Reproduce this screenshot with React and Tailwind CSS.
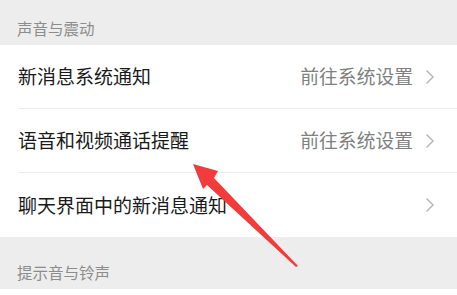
const font = { fontFamily: '"Noto Sans CJK SC", "Noto Sans", sans-serif' }

function Chevron() {
  return (
    <svg width="10" height="16" viewBox="0 0 10 16" className="ml-[12px] shrink-0">
      <path d="M1.5 1.5 L8 8 L1.5 14.5" fill="none" stroke="#b3b3b3" strokeWidth="1.4" />
    </svg>
  )
}

function Header({ title, h }) {
  return (
    <div className={`flex items-end pl-[17px] pb-[8px] bg-[#ededed] ${h}`}>
      <span className="text-[15.5px] leading-[18px] text-[#8c8c8c]">{title}</span>
    </div>
  )
}

function Row({ title, value, last }) {
  return (
    <div className="pl-[18px] bg-white">
      <div className={`flex items-center h-[64px] pr-[22px] ${last ? '' : 'border-b border-[#ececec]'}`}>
        <span className="flex-1 text-[19px] text-[#1a1a1a]">{title}</span>
        {value && <span className="text-[18.8px] text-[#808080]">{value}</span>}
        <Chevron />
      </div>
    </div>
  )
}

export default function App() {
  return (
    <div className="relative w-[457px] h-[295px] overflow-hidden bg-white" style={font}>
      <Header title="声音与震动" h="h-[45px]" />
      <Row title="新消息系统通知" value="前往系统设置" />
      <Row title="语音和视频通话提醒" value="前往系统设置" />
      <Row title="聊天界面中的新消息通知" last />
      <Header title="提示音与铃声" h="h-[52px]" />
      <div className="h-[8px] bg-white" />
      <svg className="absolute left-0 top-0" width="457" height="295" viewBox="0 0 457 295">
        <polygon points="193,164 218,171 214,178 298,266 296,267 207,185 203,189" fill="#f23b3b" />
      </svg>
    </div>
  )
}
